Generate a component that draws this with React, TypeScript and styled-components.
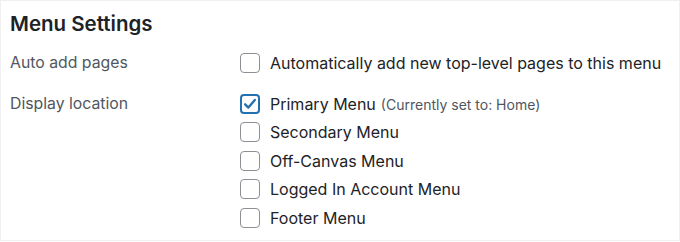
import styled, { createGlobalStyle } from "styled-components";

const GlobalStyle = createGlobalStyle`
  html, body {
    margin: 0;
    padding: 0;
    background: #fff;
  }
  body {
    font-family: Inter, "Noto Sans", "Liberation Sans", sans-serif;
    -webkit-font-smoothing: antialiased;
  }
`;

const Panel = styled.div`
  box-sizing: border-box;
  width: 680px;
  height: 241px;
  border: 1px solid #f0f0f1;
  padding: 10px 9px 0 9px;
`;

const Title = styled.h3`
  margin: 0 0 12px 0;
  font-size: 20.5px;
  font-weight: 600;
  color: #1d2327;
  line-height: 26px;
`;

const SettingRow = styled.div`
  display: grid;
  grid-template-columns: 230px 1fr;
  margin-bottom: 12px;
`;

const Label = styled.div`
  font-size: 15.8px;
  color: #50575e;
  line-height: 28px;
`;

const Options = styled.div`
  display: flex;
  flex-direction: column;
`;

const Option = styled.label`
  display: flex;
  align-items: center;
  gap: 10px;
  height: 28.5px;
  font-size: 16px;
  color: #1d2327;
`;

const Box = styled.span<{ checked?: boolean }>`
  box-sizing: border-box;
  flex: none;
  width: 20px;
  height: 20px;
  border-radius: 4px;
  border: ${({ checked }) => (checked ? "2px solid #2271b1" : "1px solid #8c8f94")};
  display: flex;
  align-items: center;
  justify-content: center;
  background: #fff;
`;

const Note = styled.span`
  font-size: 14px;
  color: #50575e;
  margin-left: 5px;
`;

const Check = () => (
  <svg width="14" height="14" viewBox="0 0 13 13">
    <path d="M2 6.8 L5 9.8 L11 2.8" fill="none" stroke="#2271b1" strokeWidth="2.2" strokeLinecap="round" strokeLinejoin="round" />
  </svg>
);

const locations = [
  { name: "Primary Menu", note: "(Currently set to: Home)", checked: true },
  { name: "Secondary Menu" },
  { name: "Off-Canvas Menu" },
  { name: "Logged In Account Menu" },
  { name: "Footer Menu" },
];

export default function App() {
  return (
    <>
      <GlobalStyle />
      <Panel>
        <Title>Menu Settings</Title>
        <SettingRow>
          <Label>Auto add pages</Label>
          <Options>
            <Option>
              <Box />
              Automatically add new top-level pages to this menu
            </Option>
          </Options>
        </SettingRow>
        <SettingRow>
          <Label>Display location</Label>
          <Options>
            {locations.map((loc) => (
              <Option key={loc.name}>
                <Box checked={loc.checked}>{loc.checked && <Check />}</Box>
                <span>
                  {loc.name}
                  {loc.note && <Note>{loc.note}</Note>}
                </span>
              </Option>
            ))}
          </Options>
        </SettingRow>
      </Panel>
    </>
  );
}
